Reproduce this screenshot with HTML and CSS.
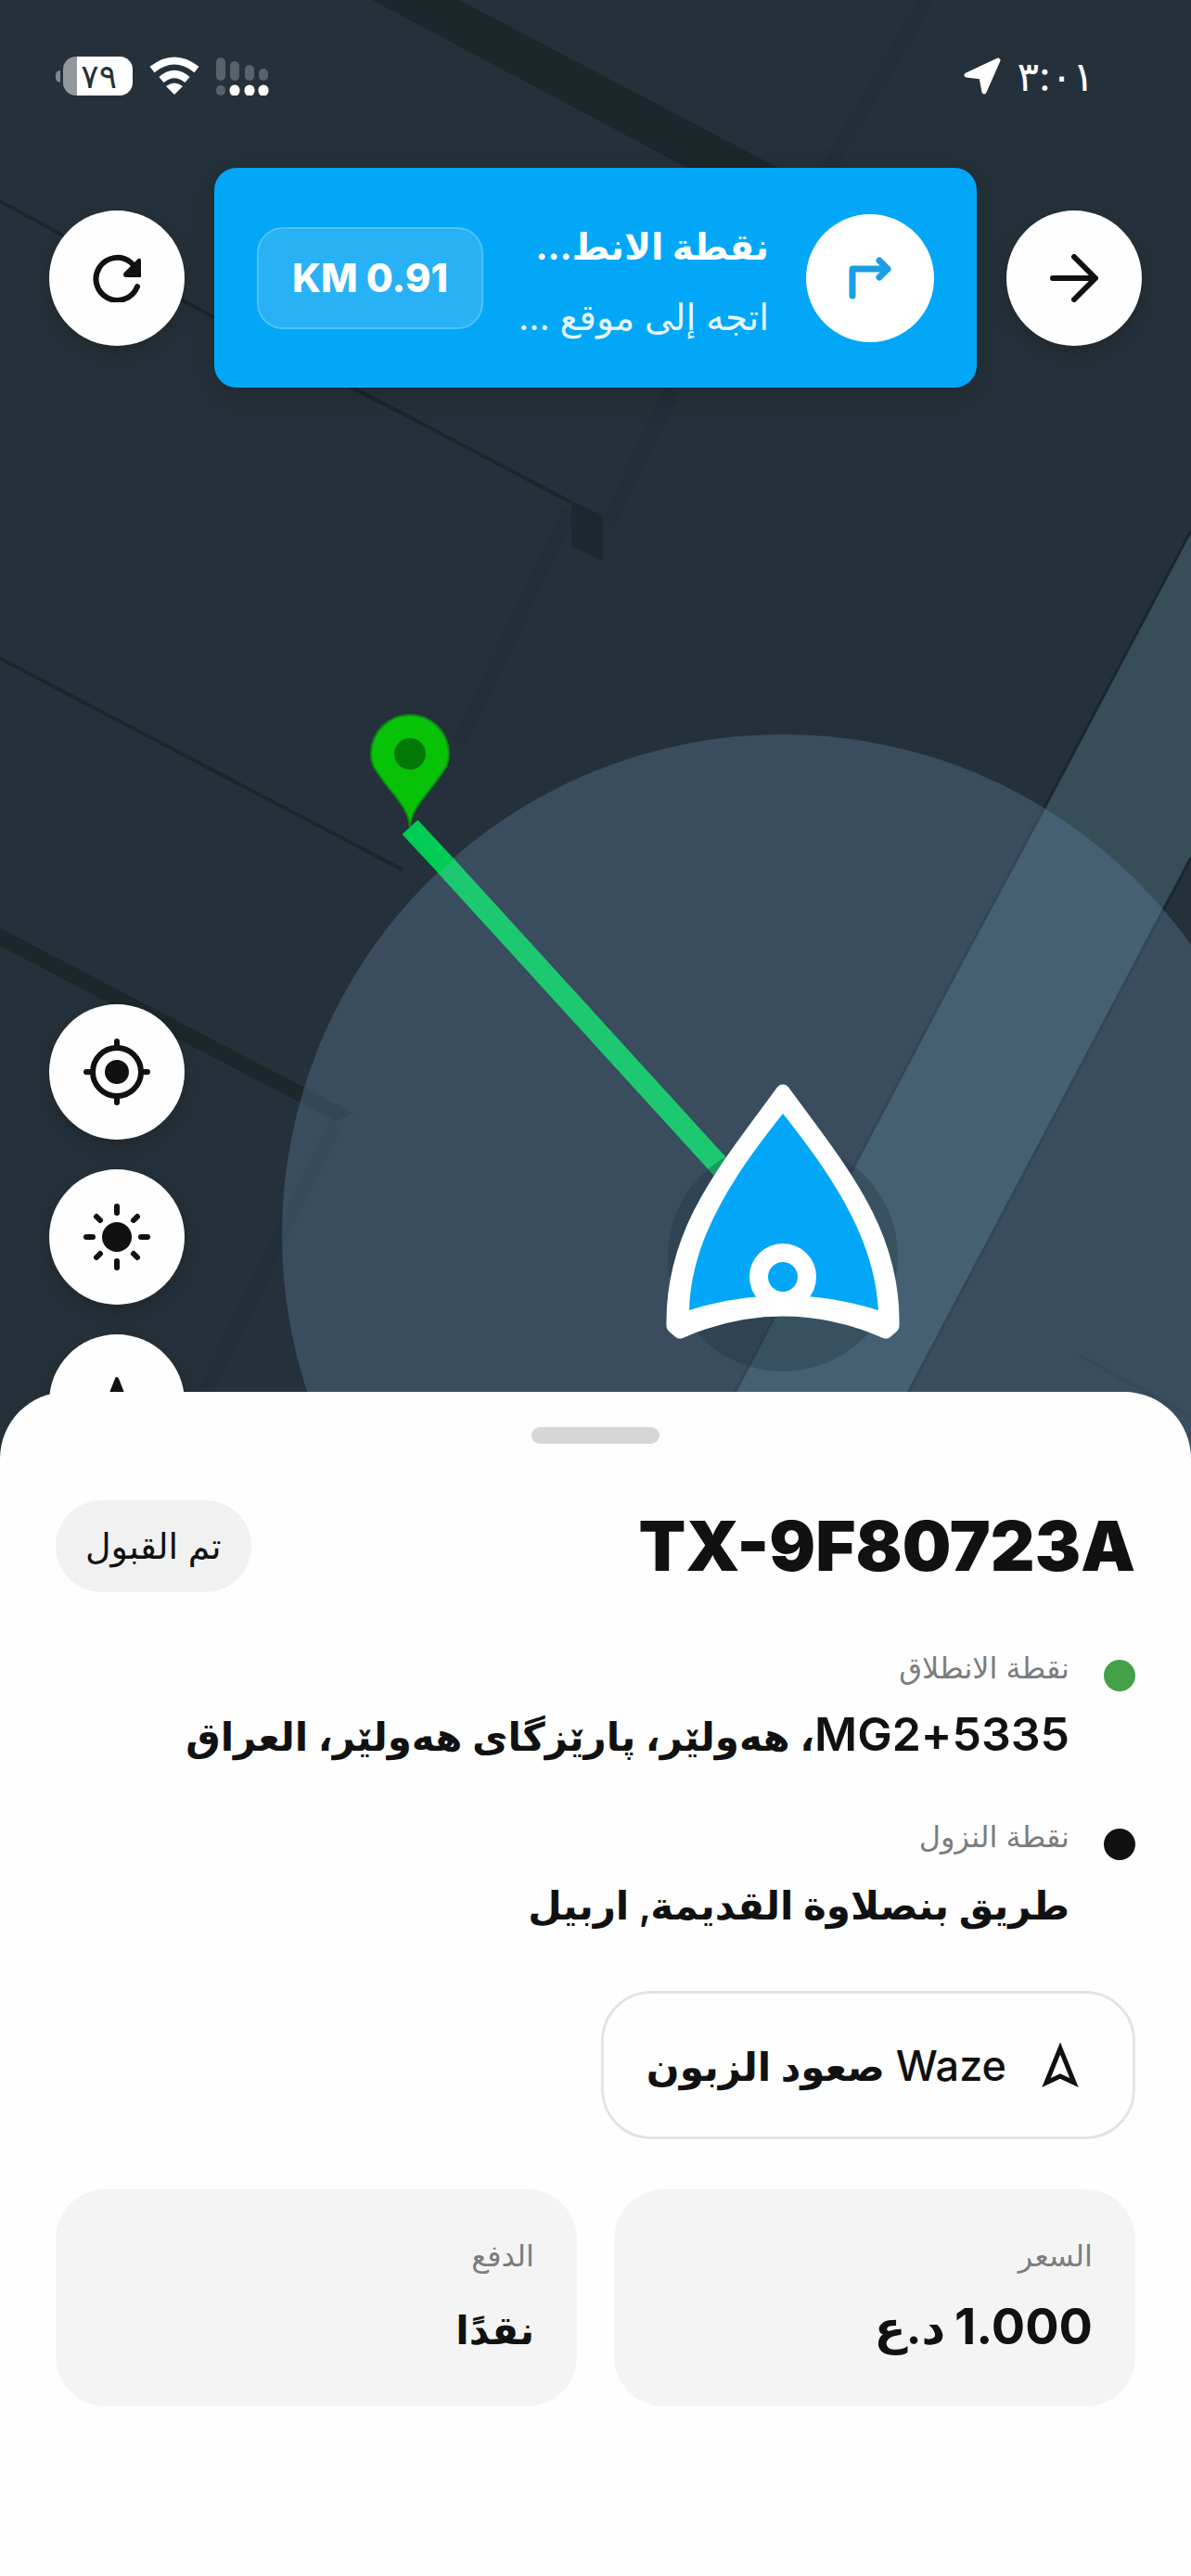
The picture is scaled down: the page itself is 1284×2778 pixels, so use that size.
FILE: index.html
```html
<!DOCTYPE html>
<html lang="ar" dir="rtl">
<head>
  <meta charset="UTF-8">
  <meta name="viewport" content="width=device-width, initial-scale=1.0">
  <title>TX-9F80723A</title>
  <link rel="stylesheet" href="styles.css">
</head>
<body>

  <main class="map">
    <svg class="map-canvas" viewBox="0 0 1284 1585" preserveAspectRatio="xMidYMin slice" aria-hidden="true">
      <!-- buildings -->
      <path d="M999 0 893 181M725 420 655 565M614 550 496 800M362 1211 217 1510" fill="none" stroke="#222e38" stroke-width="16"/>
      <path d="M401 0H495L839 181H741Z" fill="#1c272c"/>
      <path d="M0 217 221 337 442 450 616 542M0 710 434 938" fill="none" stroke="#1a252c" stroke-width="4"/>
      <path d="M616 540 650 556V605L616 589Z" fill="#1c2730"/>
      <path d="M0 1001 94 1050 382 1201 362 1209 57 1050 0 1020Z" fill="#1c272c"/>
      <path d="M1163 1461 1284 1528" fill="none" stroke="#1e2a32" stroke-width="4"/>
      <!-- road -->
      <path d="M1284 572V925L980 1500 940 1585H750L793 1500 1030 1050Z" fill="#374d58"/>
      <path d="M1284 572 1126 871 1030 1050 793 1500 750 1585M1284 925 1218 1050 980 1500 940 1585" fill="none" stroke="#1b272e" stroke-width="3"/>
      <!-- location accuracy -->
      <circle cx="844" cy="1332" r="540" fill="#658aab" fill-opacity=".33"/>
      <!-- pickup pin -->
      <path d="M442 892C440 872 428 862 414 843C404 829 400 825 400 813A42 42 0 0 1 484 813C484 825 480 829 470 843C456 862 444 872 442 892Z" fill="#08c208" stroke="#0b8a16" stroke-width="2"/>
      <circle cx="442" cy="813" r="17" fill="#007a04"/>
      <!-- route -->
      <path d="M442 892 482 935" stroke="#00cc55" stroke-width="23"/>
      <path d="M481 934 790 1273" stroke="#1cc971" stroke-width="23"/>
      <!-- driver -->
      <circle cx="844" cy="1355" r="124" fill="#1c2d38" fill-opacity=".3"/>
      <path d="M844 1177C782 1262 724 1328 726 1430L733 1436Q844 1388 955 1436L962 1430C964 1328 906 1262 844 1177Z" fill="#fff" stroke="#fff" stroke-width="15" stroke-linejoin="round"/>
      <path d="M844 1201C785 1275 745 1340 743 1413Q844 1381 947 1413C943 1340 903 1275 844 1201Z" fill="#02a7f7"/>
      <circle cx="844" cy="1377" r="26" fill="#02a7f7" stroke="#fff" stroke-width="20"/>
    </svg>

    <div class="status-bar">
      <div class="status-group">
        <span class="clock">٣:٠١</span>
        <svg class="location-icon" viewBox="0 0 40 40" aria-hidden="true"><path d="M37 3 22 37 19 21 3 19Z" fill="#fff" stroke="#fff" stroke-width="5" stroke-linejoin="round"/></svg>
      </div>
      <div class="status-group">
        <svg class="signal-icon" viewBox="0 0 57 42" aria-hidden="true">
          <path d="M5 6V21M20 10V21M36 14V21M51 18V21M5 36V37" stroke="#57626b" stroke-width="10" stroke-linecap="round"/>
          <path d="M20 36V37M36 36V37M51 36V37" stroke="#fff" stroke-width="11" stroke-linecap="round"/>
        </svg>
        <svg class="wifi-icon" viewBox="0 0 56 42" aria-hidden="true">
          <path d="M4 14Q28-5 52 14M14 25Q28 13 42 25" fill="none" stroke="#fff" stroke-width="8"/>
          <path d="M28 41 19 32Q28 25 37 32Z" fill="#fff"/>
        </svg>
        <div class="battery"><span class="battery-level">٧٩</span></div>
      </div>
    </div>

    <div class="nav-row">
      <button class="round-btn" aria-label="رجوع">
        <svg viewBox="0 0 52 52" fill="none" stroke="#111" stroke-width="6" stroke-linecap="round" stroke-linejoin="round"><path d="M3 26H48M26 3 49 26 26 49"/></svg>
      </button>
      <div class="banner">
        <div class="turn">
          <svg viewBox="0 0 46 46" fill="none" stroke="#1b9fe3" stroke-width="7" stroke-linecap="round" stroke-linejoin="round"><path d="M4 42V13H42M33 4 42 13 33 22"/></svg>
        </div>
        <div class="banner-text">
          <h2 class="banner-title">نقطة الانط…</h2>
          <p class="banner-sub">اتجه إلى موقع …</p>
        </div>
        <div class="distance">0.91 KM</div>
      </div>
      <button class="round-btn" aria-label="تحديث">
        <svg viewBox="0 0 52 52" fill="none" stroke="#111" stroke-width="6" stroke-linecap="round" stroke-linejoin="round"><path d="M48 35A23 23 0 1 1 41 9L49 17"/><path d="M50 8V22H36Z" fill="#111"/></svg>
      </button>
    </div>

    <div class="controls">
      <button class="round-btn" aria-label="موقعي">
        <svg class="icon-lg" viewBox="0 0 72 72" fill="none" stroke="#111" stroke-width="6" stroke-linecap="round"><circle cx="36" cy="36" r="26"/><path d="M36 3V10M36 62V69M3 36H10M62 36H69"/><circle cx="36" cy="36" r="13" fill="#111" stroke="none"/></svg>
      </button>
      <button class="round-btn" aria-label="الوضع النهاري">
        <svg class="icon-lg" viewBox="0 0 72 72" fill="none" stroke="#111" stroke-width="6" stroke-linecap="round"><circle cx="36" cy="36" r="16" fill="#111" stroke="none"/><path d="M36 3V10M36 62V69M3 36H10M62 36H69M14 14 18 18M54 54 58 58M14 58 18 54M54 18 58 14"/></svg>
      </button>
      <button class="round-btn" aria-label="الاتجاه">
        <svg class="icon-lg" viewBox="0 0 72 72"><path d="M36 11 56 62 36 53 16 62Z" fill="#111" stroke="#111" stroke-width="4" stroke-linejoin="round"/></svg>
      </button>
    </div>
  </main>

  <section class="sheet">
    <div class="handle"></div>

    <header class="sheet-head">
      <h1 class="trip-id">TX-9F80723A</h1>
      <span class="chip">تم القبول</span>
    </header>

    <div class="stops">
      <div class="stop">
        <span class="dot dot-pickup"></span>
        <div class="stop-text">
          <p class="label">نقطة الانطلاق</p>
          <p class="address"><span class="plus-code">5335+MG2</span>، هەولێر، پارێزگای هەولێر، العراق</p>
        </div>
      </div>
      <div class="stop">
        <span class="dot"></span>
        <div class="stop-text">
          <p class="label">نقطة النزول</p>
          <p class="address">طريق بنصلاوة القديمة, اربيل</p>
        </div>
      </div>
    </div>

    <button class="waze-btn">
      <svg viewBox="0 0 40 48" aria-hidden="true"><path d="M20 6 35 43 20 36 5 43Z" fill="none" stroke="#111" stroke-width="5"/></svg>
      <span>Waze <span class="waze-action">صعود الزبون</span></span>
    </button>

    <div class="cards">
      <div class="card">
        <p class="label">السعر</p>
        <p class="amount"><span class="price">1.000</span> <span class="currency">د.ع</span></p>
      </div>
      <div class="card">
        <p class="label">الدفع</p>
        <p class="amount">نقدًا</p>
      </div>
    </div>
  </section>

</body>
</html>
```

FILE: styles.css
```css
* {
  box-sizing: border-box;
  margin: 0;
}
body {
  display: flex;
  flex-direction: column;
  min-height: 100vh;
  background: #fefefe;
  color: #111;
  font-family: Inter, "DejaVu Sans", sans-serif;
}
button {
  border: none;
  font-family: inherit;
  color: inherit;
  cursor: pointer;
}

/* map */
.map {
  position: relative;
  flex: 1;
  display: flex;
  flex-direction: column;
  background: #25313a;
  overflow: hidden;
}
.map-canvas {
  position: absolute;
  inset: 0;
  width: 100%;
  height: 100%;
}
.status-bar,
.nav-row,
.controls {
  position: relative;
}
.status-bar {
  display: flex;
  justify-content: space-between;
  align-items: center;
  height: 164px;
  padding: 0 104px 0 60px;
}
.status-group {
  display: flex;
  align-items: center;
  gap: 17px;
}
.clock {
  color: #fff;
  font-size: 44px;
  line-height: 48px;
}
.location-icon {
  width: 40px;
  height: 40px;
}
.signal-icon {
  width: 57px;
  height: 42px;
}
.wifi-icon {
  width: 56px;
  height: 42px;
}
.battery {
  display: flex;
  align-items: center;
}
.battery-level {
  width: 75px;
  height: 42px;
  border-radius: 14px;
  background: linear-gradient(to right, #9298a0 15px, #fff 15px);
  color: #25313a;
  font-size: 36px;
  line-height: 42px;
  padding-right: 17px;
}
.battery::after {
  content: "";
  width: 5px;
  height: 13px;
  margin-right: 3px;
  border-radius: 5px 0 0 5px;
  background: #7d868e;
}

.nav-row {
  display: flex;
  align-items: center;
  gap: 32px;
  margin-top: 17px;
  padding: 0 53px;
}
.round-btn {
  display: flex;
  flex: none;
  justify-content: center;
  align-items: center;
  width: 146px;
  height: 146px;
  padding: 0;
  border-radius: 50%;
  background: #fefefe;
  box-shadow: 0 8px 20px rgba(0, 0, 0, 0.2);
}
.round-btn svg {
  width: 52px;
  height: 52px;
}
.round-btn .icon-lg {
  width: 72px;
  height: 72px;
}
.banner {
  display: flex;
  flex: 1;
  align-items: center;
  min-width: 0;
  height: 237px;
  padding: 0 46px;
  border-radius: 24px;
  background: #02a7f7;
  box-shadow: 0 8px 32px rgba(0, 0, 0, 0.2);
  color: #fff;
}
.turn {
  display: flex;
  flex: none;
  justify-content: center;
  align-items: center;
  width: 138px;
  height: 138px;
  border-radius: 50%;
  background: #fff;
}
.turn svg {
  width: 46px;
  height: 46px;
}
.banner-text {
  flex: 1;
  min-width: 0;
  padding-top: 8px;
  margin-right: 40px;
  white-space: nowrap;
}
.banner-title {
  font-size: 39px;
  font-weight: 700;
  line-height: 76px;
}
.banner-sub {
  color: #e6f7ff;
  font-size: 39px;
  line-height: 76px;
}
.distance {
  flex: none;
  padding: 0 36px;
  border: 2px solid #4dc3fa;
  border-radius: 28px;
  background: #29b1f5;
  font-size: 42px;
  font-weight: 800;
  line-height: 106px;
}

.controls {
  display: flex;
  flex-direction: column;
  align-items: flex-end;
  gap: 32px;
  margin-top: auto;
  padding: 32px 53px 0;
}

/* trip sheet */
.sheet {
  position: relative;
  display: flex;
  flex-direction: column;
  gap: 54px;
  margin-top: -84px;
  padding: 38px 60px 183px;
  border-radius: 72px 72px 0 0;
  background: #fefefe;
}
.handle {
  align-self: center;
  width: 138px;
  height: 18px;
  margin-bottom: 7px;
  border-radius: 9px;
  background: #d6d6d6;
}
.sheet-head {
  display: flex;
  justify-content: space-between;
  align-items: center;
}
.trip-id {
  font-size: 74px;
  font-weight: 900;
  line-height: 99px;
}
.chip {
  padding: 0 32px;
  border-radius: 50px;
  background: #f1f1f1;
  font-size: 38px;
  line-height: 99px;
}
.stops {
  display: flex;
  flex-direction: column;
  gap: 42px;
}
.stop {
  display: flex;
  gap: 37px;
}
.dot {
  flex: none;
  width: 34px;
  height: 34px;
  margin-top: 19px;
  border-radius: 50%;
  background: #111;
}
.dot-pickup {
  background: #43a047;
}
.label {
  color: #7c7c7c;
  font-size: 32px;
  line-height: 56px;
}
.address {
  margin-top: 8px;
  font-size: 42px;
  font-weight: 600;
  line-height: 76px;
}
.plus-code {
  font-size: 50px;
  line-height: 50px;
}
.waze-btn {
  display: flex;
  align-items: center;
  align-self: flex-start;
  gap: 38px;
  height: 160px;
  padding: 0 58px 0 46px;
  border: 3px solid #e3e3e3;
  border-radius: 54px;
  background: #fefefe;
  font-size: 45px;
  font-weight: 500;
  white-space: nowrap;
}
.waze-btn svg {
  width: 40px;
  height: 48px;
}
.waze-action {
  font-size: 42px;
  font-weight: 600;
}
.cards {
  display: grid;
  grid-template-columns: 1fr 1fr;
  gap: 40px;
}
.card {
  padding: 44px 46px;
  border-radius: 54px;
  background: #f4f4f4;
}
.amount {
  margin-top: 14px;
  font-size: 42px;
  font-weight: 700;
  line-height: 76px;
}
.price {
  font-size: 54px;
  line-height: 50px;
}
.currency {
  font-size: 50px;
  line-height: 50px;
}
```
